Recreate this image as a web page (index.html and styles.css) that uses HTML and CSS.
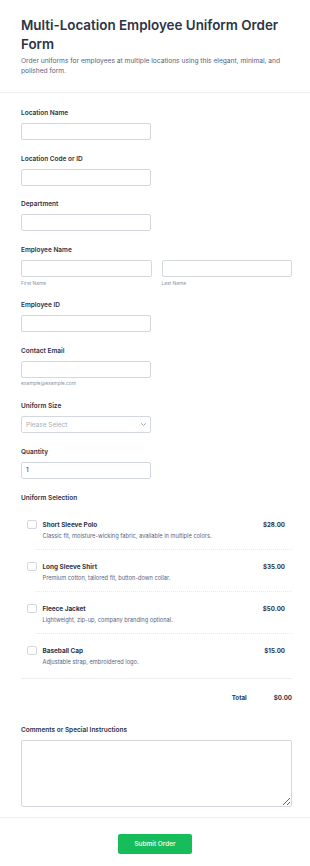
FILE: index.html
```html
<!DOCTYPE html>
<html lang="en">
<head>
    <meta charset="UTF-8">
    <meta name="viewport" content="width=device-width, initial-scale=1.0">
    <title>Multi-Location Employee Uniform Order Form</title>
    <link rel="stylesheet" href="styles.css">
</head>
<body>

    <!-- Header -->
    <div class="form-header">
        <h1>Multi-Location Employee Uniform Order Form</h1>
        <p>Order uniforms for employees at multiple locations using this elegant, minimal, and polished form.</p>
    </div>

    <!-- Fields -->
    <form class="form-body" onsubmit="return false;">
        <div class="field">
            <label>Location Name</label>
            <input type="text" class="input-half">
        </div>

        <div class="field">
            <label>Location Code or ID</label>
            <input type="text" class="input-half">
        </div>

        <div class="field">
            <label>Department</label>
            <input type="text" class="input-half">
        </div>

        <div class="field">
            <label>Employee Name</label>
            <div class="name-row">
                <div class="name-part">
                    <input type="text">
                    <span class="sublabel">First Name</span>
                </div>
                <div class="name-part">
                    <input type="text">
                    <span class="sublabel">Last Name</span>
                </div>
            </div>
        </div>

        <div class="field">
            <label>Employee ID</label>
            <input type="text" class="input-half">
        </div>

        <div class="field field-email">
            <label>Contact Email</label>
            <input type="email" class="input-half">
            <span class="sublabel">example@example.com</span>
        </div>

        <div class="field">
            <label>Uniform Size</label>
            <div class="select-wrap input-half">
                <select>
                    <option>Please Select</option>
                    <option>Small</option>
                    <option>Medium</option>
                    <option>Large</option>
                    <option>X-Large</option>
                </select>
                <svg class="chevron" viewBox="0 0 10 6" width="5" height="3"><path d="M1 1l4 4 4-4" fill="none" stroke="#8a94a6" stroke-width="1.6" stroke-linecap="round" stroke-linejoin="round"/></svg>
            </div>
        </div>

        <div class="field">
            <label>Quantity</label>
            <input type="number" class="input-half" value="1">
        </div>

        <!-- Product list -->
        <div class="field">
            <label>Uniform Selection</label>
            <div class="products">
                <div class="product">
                    <input type="checkbox" data-price="28">
                    <div class="product-info">
                        <div class="product-name">Short Sleeve Polo</div>
                        <div class="product-desc">Classic fit, moisture-wicking fabric, available in multiple colors.</div>
                    </div>
                    <div class="product-price">$28.00</div>
                </div>
                <div class="product">
                    <input type="checkbox" data-price="35">
                    <div class="product-info">
                        <div class="product-name">Long Sleeve Shirt</div>
                        <div class="product-desc">Premium cotton, tailored fit, button-down collar.</div>
                    </div>
                    <div class="product-price">$35.00</div>
                </div>
                <div class="product">
                    <input type="checkbox" data-price="50">
                    <div class="product-info">
                        <div class="product-name">Fleece Jacket</div>
                        <div class="product-desc">Lightweight, zip-up, company branding optional.</div>
                    </div>
                    <div class="product-price">$50.00</div>
                </div>
                <div class="product">
                    <input type="checkbox" data-price="15">
                    <div class="product-info">
                        <div class="product-name">Baseball Cap</div>
                        <div class="product-desc">Adjustable strap, embroidered logo.</div>
                    </div>
                    <div class="product-price">$15.00</div>
                </div>
            </div>
            <div class="total-row">
                <span class="total-label">Total</span>
                <span class="total-value" id="totalValue">$0.00</span>
            </div>
        </div>

        <div class="field field-last">
            <label>Comments or Special Instructions</label>
            <textarea></textarea>
        </div>
    </form>

    <!-- Footer -->
    <div class="form-footer">
        <button type="button" class="submit-btn">Submit Order</button>
    </div>

    <script>
        // Update total when a product is checked
        const boxes = document.querySelectorAll('.product input');
        boxes.forEach(box => {
            box.addEventListener('change', () => {
                let total = 0;
                boxes.forEach(b => {
                    if (b.checked) total += Number(b.dataset.price);
                });
                document.getElementById('totalValue').textContent = '$' + total.toFixed(2);
            });
        });
    </script>

</body>
</html>
```

FILE: styles.css
```css
/* General Styles */
* {
    box-sizing: border-box;
}

body {
    font-family: Inter, "Noto Sans", sans-serif;
    margin: 0;
    padding: 0;
    background-color: #fff;
    color: #2c3345;
}

/* Header */
.form-header {
    padding: 15.5px 21px 16px;
    border-bottom: 1px solid #eceef2;
}

.form-header h1 {
    font-size: 13.4px;
    font-weight: 600;
    line-height: 19px;
    margin: 0;
}

.form-header p {
    font-size: 6.65px;
    line-height: 10px;
    color: #57647e;
    margin: 2.5px 0 0;
}

/* Form body */
.form-body {
    padding: 15px 18px 0 21px;
}

.field {
    margin-bottom: 13.7px;
}

.field-last {
    margin-bottom: 10px;
}

.field label {
    display: block;
    font-size: 6.5px;
    font-weight: 600;
    line-height: 10px;
    margin-bottom: 5px;
    color: #2c3345;
}

input[type="text"],
input[type="email"],
input[type="number"],
select,
textarea {
    display: block;
    width: 100%;
    height: 17px;
    border: 1px solid #d3d8e0;
    border-radius: 2px;
    background-color: #fff;
    font-family: Inter, sans-serif;
    font-size: 6.5px;
    color: #2c3345;
    padding: 0 4px;
    outline: none;
}

.input-half {
    width: 130px !important;
}

input[type="number"] {
    -moz-appearance: textfield;
}

input[type="number"]::-webkit-inner-spin-button {
    -webkit-appearance: none;
}

.sublabel {
    display: block;
    font-size: 4.9px;
    line-height: 7px;
    color: #8a94a6;
    margin-top: 2.5px;
}

.field-email .sublabel {
    margin-bottom: 1px;
}

.name-row {
    display: flex;
    gap: 10px;
}

.name-part {
    flex: 1;
}

.select-wrap {
    position: relative;
}

.select-wrap select {
    -webkit-appearance: none;
    appearance: none;
    color: #a6aebb;
}

.chevron {
    position: absolute;
    right: 5px;
    top: 7px;
}

/* Products */
.products {
    margin-top: 2px;
    border-bottom: 1px solid #eceef2;
}

.product {
    display: flex;
    align-items: flex-start;
    margin-left: 14px;
    padding: 12px 7px 8px 0;
    border-bottom: 1px dotted #e6e9ee;
}

.product:last-child {
    border-bottom: none;
    padding-bottom: 11px;
}

.product input {
    -webkit-appearance: none;
    appearance: none;
    width: 9.5px;
    height: 9.5px;
    margin: 0 0 0 -8px;
    border: 1px solid #d3d8e0;
    border-radius: 2px;
    background-color: #fff;
    flex-shrink: 0;
}

.product input:checked {
    background-color: #18bd5b;
    border-color: #18bd5b;
}

.product-info {
    flex: 1;
    margin-left: 6px;
}

.product-name {
    font-size: 6.4px;
    font-weight: 700;
    line-height: 10px;
    color: #2c3345;
}

.product-desc {
    font-size: 5.7px;
    line-height: 10px;
    margin-top: 1px;
    color: #57647e;
}

.product-price {
    font-size: 6.2px;
    font-weight: 700;
    line-height: 10px;
    color: #2c3345;
}

.total-row {
    display: flex;
    justify-content: flex-end;
    align-items: center;
    padding: 14px 0 8.5px;
    line-height: 10px;
    font-size: 6.2px;
    font-weight: 700;
}

.total-label {
    margin-right: 27px;
}

textarea {
    height: 67px;
    resize: vertical;
    padding: 4px;
}

/* Footer */
.form-footer {
    border-top: 1px solid #eceef2;
    padding: 12.5px 0 16px;
    text-align: center;
}

.submit-btn {
    width: 74px;
    height: 20px;
    border: none;
    border-radius: 2px;
    background-color: #18bd5b;
    color: #fff;
    font-family: Inter, sans-serif;
    font-size: 6.5px;
    font-weight: 500;
    cursor: pointer;
}

.submit-btn:hover {
    background-color: #14a44e;
}
```
